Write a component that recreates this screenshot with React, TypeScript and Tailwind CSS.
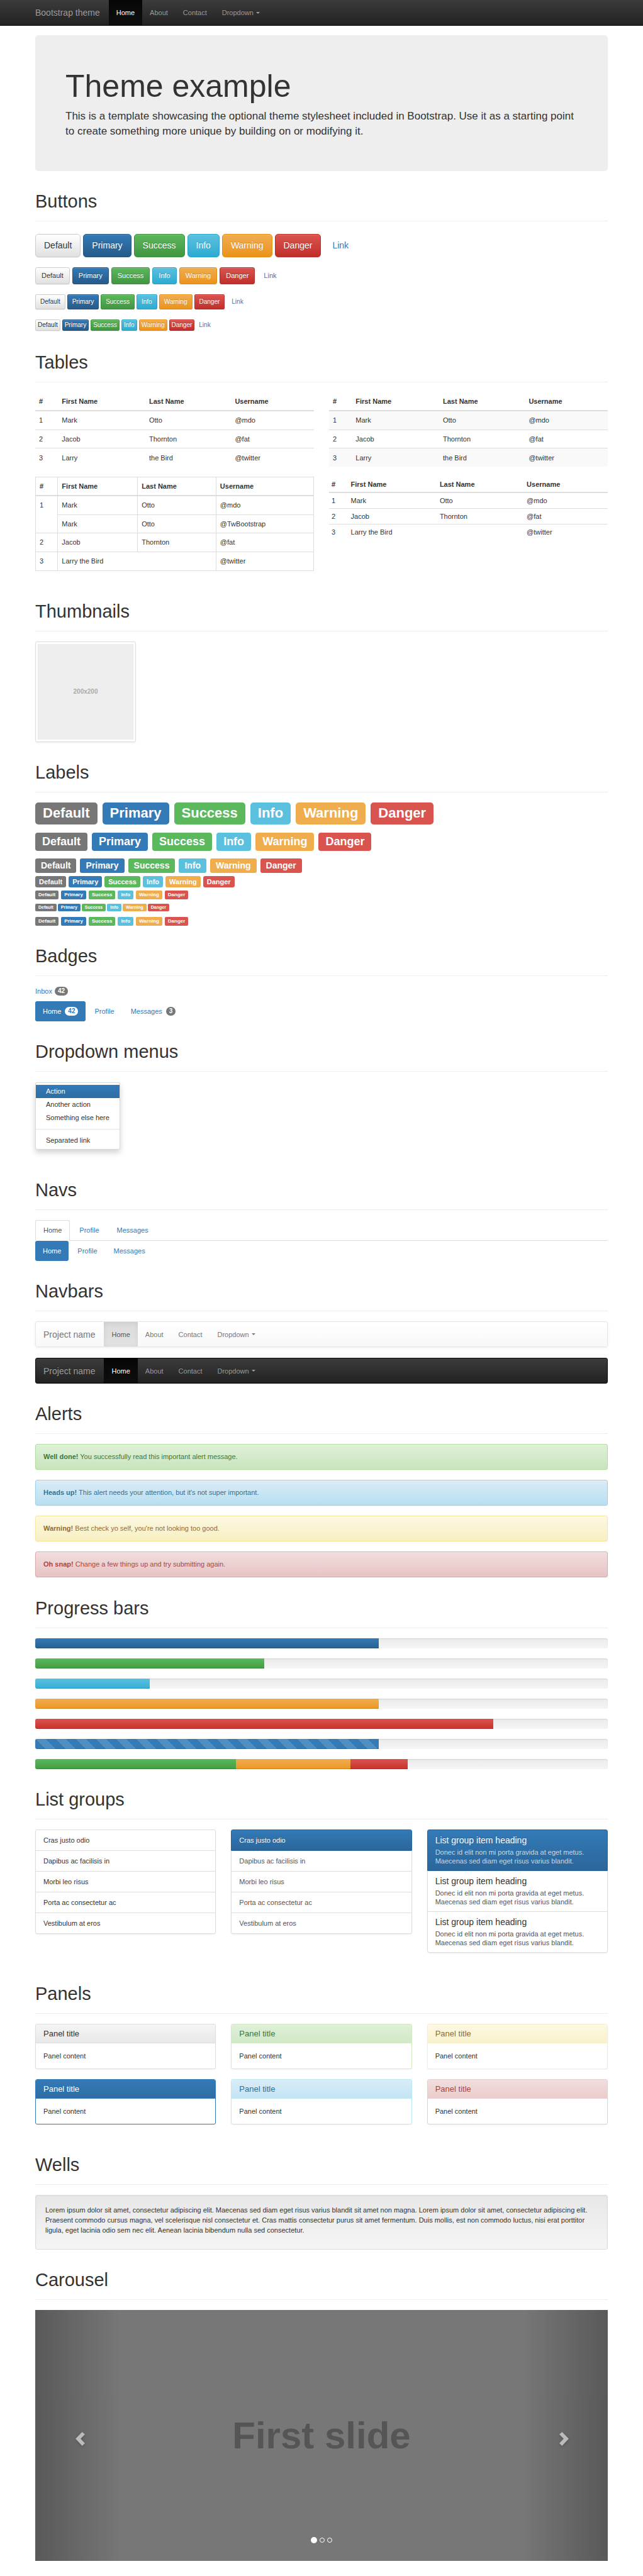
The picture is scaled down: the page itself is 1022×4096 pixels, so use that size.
import type { ReactNode } from "react";

type Tone = "default" | "primary" | "success" | "info" | "warning" | "danger";

const tones: { tone: Tone; label: string }[] = [
  { tone: "default", label: "Default" },
  { tone: "primary", label: "Primary" },
  { tone: "success", label: "Success" },
  { tone: "info", label: "Info" },
  { tone: "warning", label: "Warning" },
  { tone: "danger", label: "Danger" },
];

const shadowDown = "[text-shadow:0_-1px_0_rgba(0,0,0,0.2)]";

const buttonTone: Record<Tone, string> = {
  default: "border-[#ccc] bg-linear-to-b from-white to-[#e0e0e0] text-[#333] [text-shadow:0_1px_0_#fff]",
  primary: "border-[#245580] bg-linear-to-b from-[#337ab7] to-[#265a88] text-white",
  success: "border-[#3e8f3e] bg-linear-to-b from-[#5cb85c] to-[#419641] text-white",
  info: "border-[#28a4c9] bg-linear-to-b from-[#5bc0de] to-[#2aabd2] text-white",
  warning: "border-[#e38d13] bg-linear-to-b from-[#f0ad4e] to-[#eb9316] text-white",
  danger: "border-[#b92c28] bg-linear-to-b from-[#d9534f] to-[#c12e2a] text-white",
};

const labelTone: Record<Tone, string> = {
  default: "bg-[#777]",
  primary: "bg-[#337ab7]",
  success: "bg-[#5cb85c]",
  info: "bg-[#5bc0de]",
  warning: "bg-[#f0ad4e]",
  danger: "bg-[#d9534f]",
};

const barTone = {
  primary: "bg-linear-to-b from-[#337ab7] to-[#286090]",
  success: "bg-linear-to-b from-[#5cb85c] to-[#449d44]",
  info: "bg-linear-to-b from-[#5bc0de] to-[#31b0d5]",
  warning: "bg-linear-to-b from-[#f0ad4e] to-[#ec971f]",
  danger: "bg-linear-to-b from-[#d9534f] to-[#c9302c]",
  striped:
    "bg-[#337ab7] bg-[linear-gradient(45deg,rgba(255,255,255,0.15)_25%,transparent_25%,transparent_50%,rgba(255,255,255,0.15)_50%,rgba(255,255,255,0.15)_75%,transparent_75%,transparent)] bg-[size:32px_32px]",
};

function Section({ title, children }: { title: string; children: ReactNode }) {
  return (
    <section className="pt-8">
      <div className="mb-4 border-b border-[#eee] pb-[15px]">
        <h1 className="text-[29px] leading-8">{title}</h1>
      </div>
      {children}
    </section>
  );
}

function Caret() {
  return <span className="ml-1 inline-block border-x-[3px] border-t-[3px] border-x-transparent border-t-current" />;
}

const navLinks = ["Home", "About", "Contact"];

function NavItems({ inverse }: { inverse: boolean }) {
  const link = inverse
    ? "flex items-center px-3 text-[#9d9d9d] [text-shadow:0_-1px_0_rgba(0,0,0,0.25)]"
    : "flex items-center px-3 text-[#777] [text-shadow:0_1px_0_rgba(255,255,255,0.25)]";
  const active = inverse
    ? "flex items-center px-3 text-white bg-linear-to-b from-[#080808] to-[#0f0f0f] shadow-[inset_0_2px_7px_rgba(0,0,0,0.25)] [text-shadow:0_-1px_0_rgba(0,0,0,0.25)]"
    : "flex items-center px-3 text-[#555] bg-linear-to-b from-[#dbdbdb] to-[#e2e2e2] shadow-[inset_0_2px_7px_rgba(0,0,0,0.075)] [text-shadow:0_1px_0_rgba(255,255,255,0.25)]";
  return (
    <ul className="flex">
      {navLinks.map((name, i) => (
        <li key={name} className="flex">
          <a href="#" className={i === 0 ? active : link}>
            {name}
          </a>
        </li>
      ))}
      <li className="flex">
        <a href="#" className={link}>
          Dropdown
          <Caret />
        </a>
      </li>
    </ul>
  );
}

function InlineNavbar({ inverse }: { inverse: boolean }) {
  return (
    <nav
      className={
        inverse
          ? "flex min-h-[41px] rounded-[3px] border border-[#080808] bg-linear-to-b from-[#3c3c3c] to-[#222]"
          : "flex min-h-[41px] rounded-[3px] border border-[#e7e7e7] bg-linear-to-b from-white to-[#f8f8f8] shadow-[0_1px_4px_rgba(0,0,0,0.075)]"
      }
    >
      <a
        href="#"
        className={
          inverse
            ? "flex items-center pr-3.5 pl-3 text-[14px] text-[#9d9d9d] [text-shadow:0_-1px_0_rgba(0,0,0,0.25)]"
            : "flex items-center pr-3.5 pl-3 text-[14px] text-[#777] [text-shadow:0_1px_0_rgba(255,255,255,0.25)]"
        }
      >
        Project name
      </a>
      <NavItems inverse={inverse} />
    </nav>
  );
}

function ButtonRow({ gap, size }: { gap: string; size: string }) {
  return (
    <div className={`flex ${gap}`}>
      {tones.map(({ tone, label }) => (
        <button
          key={tone}
          type="button"
          className={`border shadow-[inset_0_1px_0_rgba(255,255,255,0.15),0_1px_1px_rgba(0,0,0,0.075)] ${
            tone === "default" ? "" : shadowDown
          } ${size} ${buttonTone[tone]}`}
        >
          {label}
        </button>
      ))}
      <button type="button" className={`border border-transparent text-[#337ab7] ${size}`}>
        Link
      </button>
    </div>
  );
}

function LabelRow({ row, chip }: { row: string; chip: string }) {
  return (
    <div className={`flex ${row}`}>
      {tones.map(({ tone, label }) => (
        <span key={tone} className={`font-bold text-white ${chip} ${labelTone[tone]}`}>
          {label}
        </span>
      ))}
    </div>
  );
}

const people = [
  ["1", "Mark", "Otto", "@mdo"],
  ["2", "Jacob", "Thornton", "@fat"],
  ["3", "Larry", "the Bird", "@twitter"],
];

const heads = ["#", "First Name", "Last Name", "Username"];

function PlainTable({ striped }: { striped: boolean }) {
  return (
    <table className="h-[118px] w-full table-fixed border-collapse text-left">
      <colgroup>
        <col className="w-[8.2%]" />
        <col className="w-[31.3%]" />
        <col className="w-[30.8%]" />
        <col />
      </colgroup>
      <thead>
        <tr>
          {heads.map((h) => (
            <th key={h} className="border-b-2 border-[#ddd] p-1.5 align-bottom">
              {h}
            </th>
          ))}
        </tr>
      </thead>
      <tbody>
        {people.map((row) => (
          <tr key={row[0]} className={striped ? "odd:bg-[#f9f9f9]" : ""}>
            {row.map((cell) => (
              <td key={cell} className="border-t border-[#ddd] p-1.5">
                {cell}
              </td>
            ))}
          </tr>
        ))}
      </tbody>
    </table>
  );
}

function BorderedTable() {
  const cell = "border border-[#ddd] p-1.5 align-top";
  return (
    <table className="h-[150px] w-full table-fixed border-collapse text-left">
      <colgroup>
        <col className="w-[8%]" />
        <col className="w-[28.7%]" />
        <col className="w-[28.2%]" />
        <col />
      </colgroup>
      <thead>
        <tr>
          {heads.map((h) => (
            <th key={h} className="border border-b-2 border-[#ddd] p-1.5 align-bottom">
              {h}
            </th>
          ))}
        </tr>
      </thead>
      <tbody>
        <tr>
          <td rowSpan={2} className={cell}>1</td>
          <td className={cell}>Mark</td>
          <td className={cell}>Otto</td>
          <td className={cell}>@mdo</td>
        </tr>
        <tr>
          <td className={cell}>Mark</td>
          <td className={cell}>Otto</td>
          <td className={cell}>@TwBootstrap</td>
        </tr>
        <tr>
          <td className={cell}>2</td>
          <td className={cell}>Jacob</td>
          <td className={cell}>Thornton</td>
          <td className={cell}>@fat</td>
        </tr>
        <tr>
          <td className={cell}>3</td>
          <td colSpan={2} className={cell}>Larry the Bird</td>
          <td className={cell}>@twitter</td>
        </tr>
      </tbody>
    </table>
  );
}

function CondensedTable() {
  const cell = "border-t border-[#ddd] p-1";
  return (
    <table className="w-full table-fixed border-collapse self-start text-left">
      <colgroup>
        <col className="w-[6.9%]" />
        <col className="w-[31.9%]" />
        <col className="w-[31.2%]" />
        <col />
      </colgroup>
      <thead>
        <tr>
          {heads.map((h) => (
            <th key={h} className="border-b-2 border-[#ddd] p-1">
              {h}
            </th>
          ))}
        </tr>
      </thead>
      <tbody>
        {people.slice(0, 2).map((row) => (
          <tr key={row[0]}>
            {row.map((c) => (
              <td key={c} className={cell}>
                {c}
              </td>
            ))}
          </tr>
        ))}
        <tr>
          <td className={cell}>3</td>
          <td colSpan={2} className={cell}>Larry the Bird</td>
          <td className={cell}>@twitter</td>
        </tr>
      </tbody>
    </table>
  );
}

function Badge({ children, light = false }: { children: ReactNode; light?: boolean }) {
  return (
    <span
      className={`rounded-full px-[5px] py-[2px] text-center text-[10px] leading-[10px] font-bold ${
        light ? "bg-white text-[#337ab7]" : "bg-[#777] text-white"
      }`}
    >
      {children}
    </span>
  );
}

const alerts = [
  {
    lead: "Well done!",
    text: "You successfully read this important alert message.",
    style: "border-[#b2dba1] from-[#dff0d8] to-[#c8e5bc] text-[#3c763d]",
  },
  {
    lead: "Heads up!",
    text: "This alert needs your attention, but it's not super important.",
    style: "border-[#9acfea] from-[#d9edf7] to-[#b9def0] text-[#31708f]",
  },
  {
    lead: "Warning!",
    text: "Best check yo self, you're not looking too good.",
    style: "border-[#f5e79e] from-[#fcf8e3] to-[#f8efc0] text-[#8a6d3b]",
  },
  {
    lead: "Oh snap!",
    text: "Change a few things up and try submitting again.",
    style: "border-[#dca7a7] from-[#f2dede] to-[#e7c3c3] text-[#a94442]",
  },
];

const bars: { fill: keyof typeof barTone; width: number }[][] = [
  [{ fill: "primary", width: 60 }],
  [{ fill: "success", width: 40 }],
  [{ fill: "info", width: 20 }],
  [{ fill: "warning", width: 60 }],
  [{ fill: "danger", width: 80 }],
  [{ fill: "striped", width: 60 }],
  [
    { fill: "success", width: 35 },
    { fill: "warning", width: 20 },
    { fill: "danger", width: 10 },
  ],
];

const listItems = [
  "Cras justo odio",
  "Dapibus ac facilisis in",
  "Morbi leo risus",
  "Porta ac consectetur ac",
  "Vestibulum at eros",
];

const itemBase = "block border px-3 py-2 not-first:-mt-px first:rounded-t-[3px] last:rounded-b-[3px]";
const itemActive =
  "relative border-[#2b669a] bg-linear-to-b from-[#337ab7] to-[#2b669a] text-white [text-shadow:0_-1px_0_#286090]";
const groupShadow = "self-start rounded-[3px] shadow-[0_1px_2px_rgba(0,0,0,0.075)]";

const panels = [
  { box: "border-[#ddd]", head: "border-[#ddd] from-[#f5f5f5] to-[#e8e8e8] text-[#333]" },
  { box: "border-[#d6e9c6]", head: "border-[#d6e9c6] from-[#dff0d8] to-[#d0e9c6] text-[#3c763d]" },
  { box: "border-[#faebcc]", head: "border-[#faebcc] from-[#fcf8e3] to-[#faf2cc] text-[#8a6d3b]" },
  { box: "border-[#337ab7]", head: "border-[#337ab7] from-[#337ab7] to-[#2e6da4] text-white" },
  { box: "border-[#bce8f1]", head: "border-[#bce8f1] from-[#d9edf7] to-[#c4e3f3] text-[#31708f]" },
  { box: "border-[#ebccd1]", head: "border-[#ebccd1] from-[#f2dede] to-[#ebcccc] text-[#a94442]" },
];

function Chevron({ flip = false }: { flip?: boolean }) {
  return (
    <svg
      viewBox="0 0 55 81"
      className="h-[22px] w-[15px] overflow-visible drop-shadow-[0_1px_2px_rgba(0,0,0,0.6)]"
      fill="#fff"
      aria-hidden="true"
    >
      <path d={flip ? "M55 40 16 0 0 14 25 40 0 66 16 81Z" : "M0 40 39 0 55 14 30 40 55 66 39 81Z"} />
    </svg>
  );
}

export default function App() {
  return (
    <div className="bg-white pb-6 font-['Liberation_Sans',Arial,sans-serif] text-[11px] leading-4 text-[#333]">
      <nav className="border-b border-[#080808] bg-linear-to-b from-[#3c3c3c] to-[#222]">
        <div className="mx-auto flex min-h-10 max-w-[934px] px-3">
          <a
            href="#"
            className="flex items-center pr-3.5 text-[14px] text-[#9d9d9d] [text-shadow:0_-1px_0_rgba(0,0,0,0.25)]"
          >
            Bootstrap theme
          </a>
          <NavItems inverse />
        </div>
      </nav>

      <main className="mx-auto max-w-[934px] px-3 pt-[15px]">
        <header className="rounded-[5px] bg-[#eee] px-12 pt-[54px] pb-[51px]">
          <h1 className="text-[50px] leading-[55px]">Theme example</h1>
          <p className="mt-2 text-[17px] leading-6">
            This is a template showcasing the optional theme stylesheet included in Bootstrap. Use it as a starting
            point to create something more unique by building on or modifying it.
          </p>
        </header>

        <Section title="Buttons">
          <div className="flex flex-col gap-4 pt-1 pb-[2px]">
            <ButtonRow gap="gap-1" size="rounded-[5px] px-[13px] py-[7px] text-[14px] leading-[21px]" />
            <ButtonRow gap="gap-1" size="rounded-[3px] px-[9px] py-1 text-[11px] leading-[17px]" />
            <ButtonRow gap="gap-[3px]" size="rounded-[2px] px-[7px] py-1 text-[10px] leading-[14px]" />
            <ButtonRow gap="gap-[3px]" size="rounded-[2px] px-[3px] py-px text-[10px] leading-[14px]" />
          </div>
        </Section>

        <Section title="Tables">
          <div className="grid grid-cols-2 gap-x-6 gap-y-4 pb-4">
            <PlainTable striped={false} />
            <PlainTable striped />
            <BorderedTable />
            <CondensedTable />
          </div>
        </Section>

        <Section title="Thumbnails">
          <div className="size-40 rounded-[3px] border border-[#ddd] bg-white p-[3px] shadow-[0_1px_2px_rgba(0,0,0,0.075)]">
            <div className="flex h-full items-center justify-center bg-[#eee] text-[10px] font-bold text-[#aaa]">
              200x200
            </div>
          </div>
        </Section>

        <Section title="Labels">
          <LabelRow row="gap-2" chip="rounded-[5px] px-3 pt-[5px] pb-[6px] text-[22px] leading-6" />
          <LabelRow row="mt-[13px] gap-[7px]" chip="rounded-[4px] px-[11px] pt-1 pb-[5px] text-[18px] leading-5" />
          <LabelRow row="mt-3 gap-[6px]" chip="rounded-[3px] px-[9px] pt-[3px] pb-1 text-[14px] leading-4" />
          <LabelRow row="mt-[5px] gap-1" chip="rounded-[3px] px-[6px] pt-[3px] pb-[3px] text-[11px] leading-3" />
          <LabelRow row="mt-[5px] gap-1" chip="rounded-[2px] px-[5px] pt-[2px] pb-[2px] text-[8px] leading-[10px]" />
          <LabelRow row="mt-[7px] gap-[2px]" chip="rounded-[2px] px-[5px] pt-[2px] pb-[2px] text-[7px] leading-2" />
          <LabelRow row="mt-[9px] gap-1" chip="rounded-[2px] px-[5px] pt-[2px] pb-[2px] text-[8px] leading-[10px]" />
        </Section>

        <Section title="Badges">
          <p className="mb-2 flex items-center gap-1">
            <a href="#" className="flex items-center gap-1 text-[#337ab7]">
              Inbox <Badge>42</Badge>
            </a>
          </p>
          <ul className="flex gap-[2px] text-[#337ab7]">
            <li>
              <a href="#" className="flex items-center gap-[6px] rounded-[3px] bg-[#337ab7] px-3 py-2 text-white">
                Home <Badge light>42</Badge>
              </a>
            </li>
            <li>
              <a href="#" className="block px-3 py-2">
                Profile
              </a>
            </li>
            <li>
              <a href="#" className="flex items-center gap-[6px] px-3 py-2">
                Messages <Badge>3</Badge>
              </a>
            </li>
          </ul>
        </Section>

        <Section title="Dropdown menus">
          <div className="pt-px pb-4">
            <ul className="w-max rounded-[3px] border border-black/15 bg-white py-[3px] leading-[17px] shadow-[0_5px_10px_rgba(0,0,0,0.175)]">
              <li>
                <a href="#" className="block bg-linear-to-b from-[#337ab7] to-[#2e6da4] px-4 py-[2px] text-white">
                  Action
                </a>
              </li>
              <li>
                <a href="#" className="block px-4 py-[2px]">
                  Another action
                </a>
              </li>
              <li>
                <a href="#" className="block px-4 py-[2px]">
                  Something else here
                </a>
              </li>
              <li className="my-[7px] h-px bg-[#e5e5e5]" role="separator" />
              <li>
                <a href="#" className="block px-4 py-[2px]">
                  Separated link
                </a>
              </li>
            </ul>
          </div>
        </Section>

        <Section title="Navs">
          <ul className="flex gap-[2px] border-b border-[#ddd] text-[#337ab7]">
            <li className="-mb-px">
              <a
                href="#"
                className="block rounded-t-[3px] border border-[#ddd] border-b-transparent bg-white px-3 py-[7px] leading-[17px] text-[#555]"
              >
                Home
              </a>
            </li>
            <li className="-mb-px">
              <a href="#" className="block border border-transparent px-3 py-[7px] leading-[17px]">
                Profile
              </a>
            </li>
            <li className="-mb-px">
              <a href="#" className="block border border-transparent px-3 py-[7px] leading-[17px]">
                Messages
              </a>
            </li>
          </ul>
          <ul className="flex gap-[2px] text-[#337ab7]">
            <li>
              <a href="#" className="block rounded-[3px] bg-[#337ab7] px-3 py-2 text-white">
                Home
              </a>
            </li>
            <li>
              <a href="#" className="block px-3 py-2">
                Profile
              </a>
            </li>
            <li>
              <a href="#" className="block px-3 py-2">
                Messages
              </a>
            </li>
          </ul>
        </Section>

        <Section title="Navbars">
          <div className="flex flex-col gap-[17px]">
            <InlineNavbar inverse={false} />
            <InlineNavbar inverse />
          </div>
        </Section>

        <Section title="Alerts">
          <div className="flex flex-col gap-4 pb-px">
            {alerts.map(({ lead, text, style }) => (
              <div
                key={lead}
                role="alert"
                className={`rounded-[3px] border bg-linear-to-b px-3 py-3 leading-[15px] shadow-[inset_0_1px_0_rgba(255,255,255,0.25),0_1px_2px_rgba(0,0,0,0.05)] [text-shadow:0_1px_0_rgba(255,255,255,0.2)] ${style}`}
              >
                <strong>{lead}</strong> {text}
              </div>
            ))}
          </div>
        </Section>

        <Section title="Progress bars">
          <div className="flex flex-col gap-4">
            {bars.map((parts, i) => (
              <div
                key={i}
                className="relative flex h-4 overflow-hidden rounded-[3px] bg-linear-to-b from-[#ebebeb] to-[#f5f5f5] shadow-[inset_0_1px_2px_rgba(0,0,0,0.1)]"
              >
                {parts.map(({ fill, width }) => (
                  <div
                    key={fill}
                    role="progressbar"
                    aria-label={fill}
                    aria-valuenow={width}
                    className={`h-full shadow-[inset_0_-1px_0_rgba(0,0,0,0.15)] ${barTone[fill]}`}
                    style={{ width: `${width}%` }}
                  />
                ))}
              </div>
            ))}
          </div>
        </Section>

        <Section title="List groups">
          <div className="grid grid-cols-3 gap-x-6 pb-[17px]">
            <ul className={groupShadow}>
              {listItems.map((item) => (
                <li key={item} className={`${itemBase} border-[#ddd]`}>
                  {item}
                </li>
              ))}
            </ul>
            <div className={groupShadow}>
              {listItems.map((item, i) => (
                <a key={item} href="#" className={`${itemBase} ${i === 0 ? itemActive : "border-[#ddd] text-[#555]"}`}>
                  {item}
                </a>
              ))}
            </div>
            <div className={groupShadow}>
              {[0, 1, 2].map((i) => (
                <a key={i} href="#" className={`${itemBase} ${i === 0 ? itemActive : "border-[#ddd] text-[#555]"}`}>
                  <h4 className={`mb-1 text-[14px] leading-4 ${i === 0 ? "text-white" : "text-[#333]"}`}>
                    List group item heading
                  </h4>
                  <p className={`leading-[14px] ${i === 0 ? "text-[#c7ddef]" : ""}`}>
                    Donec id elit non mi porta gravida at eget metus. Maecenas sed diam eget risus varius blandit.
                  </p>
                </a>
              ))}
            </div>
          </div>
        </Section>

        <Section title="Panels">
          <div className="grid grid-cols-3 gap-x-6 gap-y-4 pb-4">
            {panels.map(({ box, head }) => (
              <div key={box} className={`rounded-[3px] border bg-white shadow-[0_1px_2px_rgba(0,0,0,0.05)] ${box}`}>
                <div className={`rounded-t-[2px] border-b bg-linear-to-b px-3 py-2 ${head}`}>
                  <h3 className="text-[13px] leading-[13px]">Panel title</h3>
                </div>
                <div className="p-3">Panel content</div>
              </div>
            ))}
          </div>
        </Section>

        <Section title="Wells">
          <div className="rounded-[3px] border border-[#dcdcdc] bg-linear-to-b from-[#e8e8e8] to-[#f5f5f5] px-[15px] pt-[15px] pb-[22px] shadow-[inset_0_1px_3px_rgba(0,0,0,0.05)]">
            <p>
              Lorem ipsum dolor sit amet, consectetur adipiscing elit. Maecenas sed diam eget risus varius blandit sit
              amet non magna. Lorem ipsum dolor sit amet, consectetur adipiscing elit. Praesent commodo cursus magna,
              vel scelerisque nisl consectetur et. Cras mattis consectetur purus sit amet fermentum. Duis mollis, est
              non commodo luctus, nisi erat porttitor ligula, eget lacinia odio sem nec elit. Aenean lacinia bibendum
              nulla sed consectetur.
            </p>
          </div>
        </Section>

        <Section title="Carousel">
          <div className="relative flex h-[399px] items-center justify-center bg-[#777]">
            <span className="text-[60px] leading-none font-bold text-[#555]">First slide</span>
            <button
              type="button"
              aria-label="Previous"
              className="absolute inset-y-0 left-0 flex w-[15%] items-center justify-center bg-linear-to-r from-black/50 to-transparent pt-[10px] pl-[6px] opacity-50"
            >
              <Chevron />
            </button>
            <button
              type="button"
              aria-label="Next"
              className="absolute inset-y-0 right-0 flex w-[15%] items-center justify-center bg-linear-to-l from-black/50 to-transparent pt-[10px] pr-[3px] opacity-50"
            >
              <Chevron flip />
            </button>
            <div className="absolute inset-x-0 bottom-7 flex items-center justify-center gap-1">
              <button type="button" aria-label="Slide 1" className="size-[10px] rounded-full bg-white" />
              <button type="button" aria-label="Slide 2" className="size-2 rounded-full border border-white" />
              <button type="button" aria-label="Slide 3" className="size-2 rounded-full border border-white" />
            </div>
          </div>
        </Section>
      </main>
    </div>
  );
}
